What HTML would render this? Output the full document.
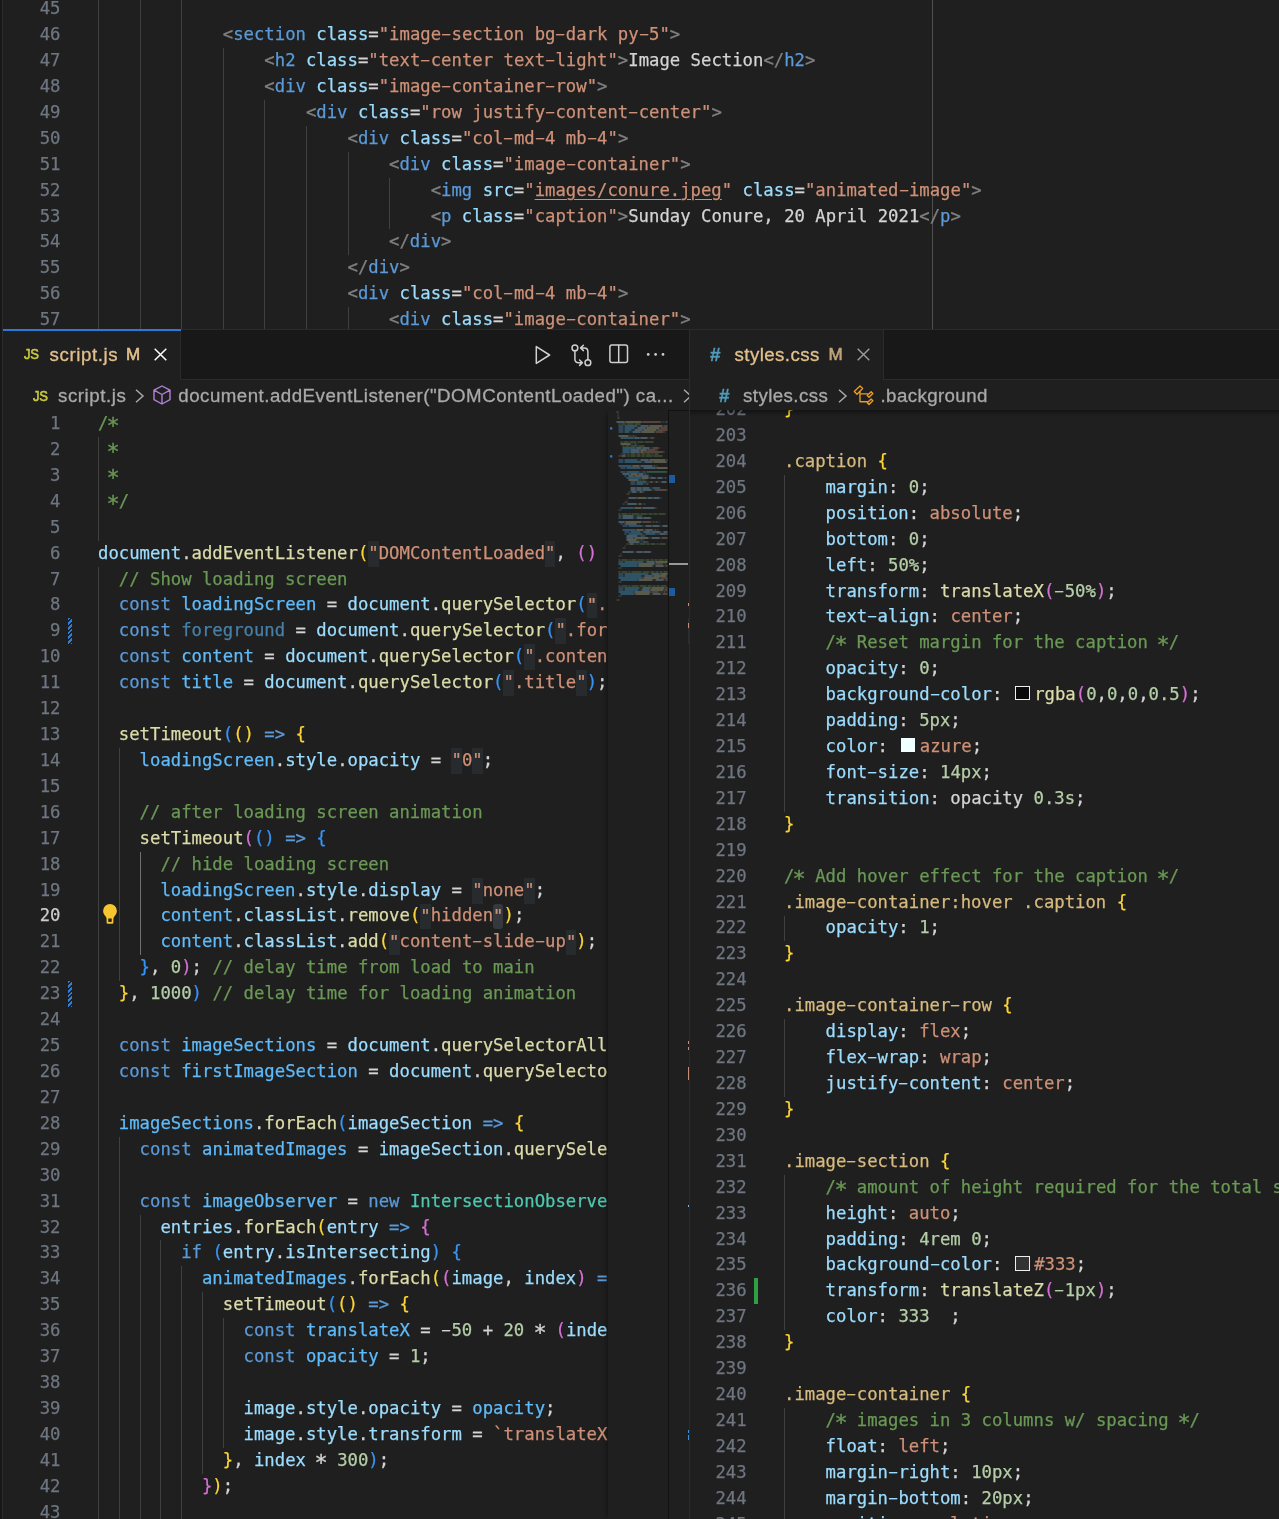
<!DOCTYPE html><html lang="en"><head><meta charset="utf-8"><title>editor</title><style>

*{margin:0;padding:0;box-sizing:border-box}
html,body{width:1279px;height:1519px;overflow:hidden;background:#1f1f1f}
body{position:relative;will-change:transform;font-family:"Liberation Sans",sans-serif;color:#ccc}
.pane{position:absolute;overflow:hidden;background:#1f1f1f}
.row{-webkit-text-stroke:.25px;position:absolute;left:0;height:25.92px;line-height:25.92px;white-space:pre;font-family:"DejaVu Sans Mono","Liberation Mono",monospace;font-size:17.28px;color:#d4d4d4}
.ln{position:absolute;left:0;width:60.5px;text-align:right;color:#6e7681}
.ln.act{color:#ccc}
.code{position:absolute;left:98px}
.k{color:#5b9ad8}.c{color:#5fbbfa}.cf{color:#5fbbfa;opacity:.62}.v{color:#9cdcfe}.f{color:#dcdcaa}
.s{color:#ce9178}.su{color:#ce9178;text-decoration:underline;text-underline-offset:3px;text-decoration-thickness:1px}
.q{color:#ce9178;background:#272b2e;padding:1.9px 0 4px}
.qs{color:#ce9178;background:#35393d;padding:1.9px 0 4px;border-radius:3px}
.n{color:#b5cea8}.m{color:#6a9955}.t{color:#4ec9b0}.g{color:#808080}
.b1{color:#fcd535}.b2{color:#d670d6}.b3{color:#3794f5}.sel{color:#d7ba7d}
.sw1,.sw2,.sw3{display:inline-block;width:14.4px;height:14.4px;border:1.4px solid #eee;margin:0 4.5px 0 2.5px;vertical-align:-.2px}
.sw1{background:#0a0a0a}.sw2{background:#f0ffff;border-color:#f0ffff}.sw3{background:#333}
.h,.a{display:inline-block;font-weight:inherit}.h{transform:translateY(-.6px) scale(1.8,.85)}.a{transform:translateY(3px) scale(1.27)}
.gd{position:absolute;width:1px;background:#404040}
.gd.ga{background:#707070}
.ui{-webkit-text-stroke:.3px;position:absolute;white-space:pre;font-size:18.7px;line-height:24px;height:24px}
.abs{position:absolute}
svg{position:absolute;overflow:visible}

</style></head><body>
<i class="abs" style="left:0;top:0;width:2px;height:1519px;background:#181818"></i><i class="abs" style="left:2px;top:0;width:1px;height:1519px;background:#2b2b2b"></i>
<div class="pane" id="top" style="left:3px;top:0;width:1276px;height:329px">
<i class="gd" style="left:95.0px;top:-3.8px;height:337.0px"></i><i class="gd" style="left:136.6px;top:-3.8px;height:337.0px"></i><i class="gd" style="left:178.2px;top:-3.8px;height:337.0px"></i><i class="gd" style="left:219.8px;top:48.0px;height:285.1px"></i><i class="gd" style="left:261.4px;top:99.9px;height:233.3px"></i><i class="gd" style="left:303.0px;top:125.8px;height:207.4px"></i><i class="gd" style="left:344.6px;top:151.7px;height:103.7px"></i><i class="gd" style="left:344.6px;top:307.2px;height:25.9px"></i><i class="gd" style="left:386.2px;top:177.6px;height:51.8px"></i>
<i class="abs" style="left:928.5px;top:0;width:1px;height:329px;background:#505050"></i>
<div class="row" style="left:-3px;top:-3.80px"><span class="ln">45</span><span class="code"></span></div>
<div class="row" style="left:-3px;top:22.12px"><span class="ln">46</span><span class="code">            <span class="g">&lt;</span><span class="k">section</span> <span class="v">class</span>=<span class="s">"image<b class="h">-</b>section bg<b class="h">-</b>dark py<b class="h">-</b>5"</span><span class="g">&gt;</span></span></div>
<div class="row" style="left:-3px;top:48.04px"><span class="ln">47</span><span class="code">                <span class="g">&lt;</span><span class="k">h2</span> <span class="v">class</span>=<span class="s">"text<b class="h">-</b>center text<b class="h">-</b>light"</span><span class="g">&gt;</span>Image Section<span class="g">&lt;/</span><span class="k">h2</span><span class="g">&gt;</span></span></div>
<div class="row" style="left:-3px;top:73.96px"><span class="ln">48</span><span class="code">                <span class="g">&lt;</span><span class="k">div</span> <span class="v">class</span>=<span class="s">"image<b class="h">-</b>container<b class="h">-</b>row"</span><span class="g">&gt;</span></span></div>
<div class="row" style="left:-3px;top:99.88px"><span class="ln">49</span><span class="code">                    <span class="g">&lt;</span><span class="k">div</span> <span class="v">class</span>=<span class="s">"row justify<b class="h">-</b>content<b class="h">-</b>center"</span><span class="g">&gt;</span></span></div>
<div class="row" style="left:-3px;top:125.80px"><span class="ln">50</span><span class="code">                        <span class="g">&lt;</span><span class="k">div</span> <span class="v">class</span>=<span class="s">"col<b class="h">-</b>md<b class="h">-</b>4 mb<b class="h">-</b>4"</span><span class="g">&gt;</span></span></div>
<div class="row" style="left:-3px;top:151.72px"><span class="ln">51</span><span class="code">                            <span class="g">&lt;</span><span class="k">div</span> <span class="v">class</span>=<span class="s">"image<b class="h">-</b>container"</span><span class="g">&gt;</span></span></div>
<div class="row" style="left:-3px;top:177.64px"><span class="ln">52</span><span class="code">                                <span class="g">&lt;</span><span class="k">img</span> <span class="v">src</span>=<span class="s">"</span><span class="su">images/conure.jpeg</span><span class="s">"</span> <span class="v">class</span>=<span class="s">"animated<b class="h">-</b>image"</span><span class="g">&gt;</span></span></div>
<div class="row" style="left:-3px;top:203.56px"><span class="ln">53</span><span class="code">                                <span class="g">&lt;</span><span class="k">p</span> <span class="v">class</span>=<span class="s">"caption"</span><span class="g">&gt;</span>Sunday Conure, 20 April 2021<span class="g">&lt;/</span><span class="k">p</span><span class="g">&gt;</span></span></div>
<div class="row" style="left:-3px;top:229.48px"><span class="ln">54</span><span class="code">                            <span class="g">&lt;/</span><span class="k">div</span><span class="g">&gt;</span></span></div>
<div class="row" style="left:-3px;top:255.40px"><span class="ln">55</span><span class="code">                        <span class="g">&lt;/</span><span class="k">div</span><span class="g">&gt;</span></span></div>
<div class="row" style="left:-3px;top:281.32px"><span class="ln">56</span><span class="code">                        <span class="g">&lt;</span><span class="k">div</span> <span class="v">class</span>=<span class="s">"col<b class="h">-</b>md<b class="h">-</b>4 mb<b class="h">-</b>4"</span><span class="g">&gt;</span></span></div>
<div class="row" style="left:-3px;top:307.24px"><span class="ln">57</span><span class="code">                            <span class="g">&lt;</span><span class="k">div</span> <span class="v">class</span>=<span class="s">"image<b class="h">-</b>container"</span><span class="g">&gt;</span></span></div>
</div>
<i class="abs" style="left:3px;top:329px;width:1276px;height:1.6px;background:#2b2b2b"></i>
<div class="pane" id="left" style="left:3px;top:330px;width:686px;height:1189px">
<div class="abs" style="left:0;top:0;width:686px;height:49px;background:#181818"></div>
<i class="abs" style="left:0;top:49px;width:686px;height:1px;background:#2b2b2b"></i>
<div class="abs" style="left:0;top:0;width:178px;height:50px;background:#1f1f1f;border-right:1px solid #2b2b2b"></div>
<span class="ui" id="ljs" style="left:21px;top:12.3px;color:#cbcb41;font-size:14.5px;-webkit-text-stroke:.55px;letter-spacing:-.3px;transform:scaleX(.9);transform-origin:0 50%">JS</span>
<span class="ui" id="ltab" style="left:46.5px;top:12.5px;color:#e2c08d;letter-spacing:.6px">script.js</span>
<span class="ui" id="ltabm" style="left:123px;top:12.5px;color:#e2c08d;font-size:17px;-webkit-text-stroke:.6px">M</span>
<svg style="left:151px;top:18px" width="13" height="13" viewBox="0 0 13 13"><path d="M.7.7l11.6 11.6M12.3.7L.7 12.3" stroke="#fff" stroke-width="1.5" fill="none"/></svg>
<svg style="left:532px;top:15px" width="16" height="20" viewBox="0 0 16 20"><path d="M1.3 1.6L14.6 10 1.3 18.4z" stroke="#d0d0d0" stroke-width="1.5" fill="none" stroke-linejoin="round"/></svg>
<svg style="left:567.5px;top:14px" width="21" height="23" viewBox="0 0 21 23"><g stroke="#d0d0d0" stroke-width="1.5" fill="none" stroke-linecap="round" stroke-linejoin="round"><circle cx="3.9" cy="3.9" r="2.9"/><circle cx="16.9" cy="18.7" r="2.9"/><path d="M3.9 6.8v8.2q0 3.7 3.7 3.7h3.6M8.6 16l2.8 2.7-2.8 2.7"/><path d="M16.9 15.8V7.6q0-3.7-3.7-3.7H9.8M12.4 1.2L9.6 3.9l2.8 2.7"/></g></svg>
<svg style="left:606px;top:14px" width="20" height="20" viewBox="0 0 20 20"><g stroke="#d0d0d0" stroke-width="1.5" fill="none"><rect x=".9" y=".9" width="17.6" height="17.6" rx="2"/><path d="M9.7.9v17.6"/></g></svg>
<svg style="left:643px;top:22px" width="20" height="5" viewBox="0 0 20 5"><g fill="#d0d0d0"><circle cx="2.2" cy="2.4" r="1.35"/><circle cx="9.6" cy="2.4" r="1.35"/><circle cx="17" cy="2.4" r="1.35"/></g></svg>
<span class="ui" id="lbjs" style="left:30px;top:53.6px;color:#cbcb41;font-size:14.5px;-webkit-text-stroke:.55px;letter-spacing:-.3px;transform:scaleX(.9);transform-origin:0 50%">JS</span>
<span class="ui" id="lb1" style="left:55px;top:53.6px;color:#a9a9a9;letter-spacing:.57px">script.js</span>
<svg style="left:132px;top:59px" width="9" height="14" viewBox="0 0 9 14"><path d="M1 .8l7 6.2-7 6.2" stroke="#a9a9a9" stroke-width="1.5" fill="none"/></svg>
<svg style="left:149.5px;top:55px" width="18" height="20" viewBox="0 0 18 20"><path d="M9 1L17 5.2v9.4L9 19 1 14.6V5.2zM1 5.2l8 4.3 8-4.3M9 9.5V19" stroke="#b180d7" stroke-width="1.4" fill="none" stroke-linejoin="round"/></svg>
<span class="ui" id="lb2" style="left:175.3px;top:53.6px;color:#a9a9a9;letter-spacing:.49px">document.addEventListener("DOMContentLoaded") ca...</span>
<svg style="left:680px;top:59px" width="9" height="14" viewBox="0 0 9 14"><path d="M1 .8l7 6.2-7 6.2" stroke="#a9a9a9" stroke-width="1.5" fill="none"/></svg>
<div class="abs" id="lcode" style="left:0;top:80px;width:604.5px;height:1109px;overflow:hidden">
<i class="gd" style="left:95.0px;top:26.9px;height:103.7px"></i><i class="gd" style="left:95.0px;top:156.5px;height:959.0px"></i><i class="gd" style="left:115.8px;top:338.0px;height:233.3px"></i><i class="gd ga" style="left:136.6px;top:441.6px;height:103.7px"></i><i class="gd" style="left:115.8px;top:726.8px;height:388.8px"></i><i class="gd" style="left:136.6px;top:804.5px;height:311.0px"></i><i class="gd" style="left:157.4px;top:830.4px;height:285.1px"></i><i class="gd" style="left:178.2px;top:856.4px;height:259.2px"></i><i class="gd" style="left:199.0px;top:882.3px;height:181.4px"></i><i class="gd" style="left:219.8px;top:908.2px;height:129.6px"></i>
<div class="row" style="left:-3px;top:1.00px"><span class="ln">1</span><span class="code"><span class="m">/<b class="a">*</b></span></span></div>
<div class="row" style="left:-3px;top:26.92px"><span class="ln">2</span><span class="code"><span class="m"> <b class="a">*</b></span></span></div>
<div class="row" style="left:-3px;top:52.84px"><span class="ln">3</span><span class="code"><span class="m"> <b class="a">*</b></span></span></div>
<div class="row" style="left:-3px;top:78.76px"><span class="ln">4</span><span class="code"><span class="m"> <b class="a">*</b>/</span></span></div>
<div class="row" style="left:-3px;top:104.68px"><span class="ln">5</span><span class="code"></span></div>
<div class="row" style="left:-3px;top:130.60px"><span class="ln">6</span><span class="code"><span class="v">document</span>.<span class="f">addEventListener</span><span class="b1">(</span><span class="q">"</span><span class="s">DOMContentLoaded</span><span class="q">"</span>, <span class="b2">()</span> <span class="k">=&gt;</span> <span class="b2">{</span></span></div>
<div class="row" style="left:-3px;top:156.52px"><span class="ln">7</span><span class="code">  <span class="m">// Show loading screen</span></span></div>
<div class="row" style="left:-3px;top:182.44px"><span class="ln">8</span><span class="code">  <span class="k">const</span> <span class="c">loadingScreen</span> = <span class="v">document</span>.<span class="f">querySelector</span><span class="b3">(</span><span class="q">"</span><span class="s">.loading<b class="h">-</b>screen</span><span class="q">"</span><span class="b3">)</span>;</span></div>
<div class="row" style="left:-3px;top:208.36px"><span class="ln">9</span><span class="code">  <span class="k">const</span> <span class="cf">foreground</span> = <span class="v">document</span>.<span class="f">querySelector</span><span class="b3">(</span><span class="q">"</span><span class="s">.foreground</span><span class="q">"</span><span class="b3">)</span>;</span></div>
<div class="row" style="left:-3px;top:234.28px"><span class="ln">10</span><span class="code">  <span class="k">const</span> <span class="c">content</span> = <span class="v">document</span>.<span class="f">querySelector</span><span class="b3">(</span><span class="q">"</span><span class="s">.content</span><span class="q">"</span><span class="b3">)</span>;</span></div>
<div class="row" style="left:-3px;top:260.20px"><span class="ln">11</span><span class="code">  <span class="k">const</span> <span class="c">title</span> = <span class="v">document</span>.<span class="f">querySelector</span><span class="b3">(</span><span class="q">"</span><span class="s">.title</span><span class="q">"</span><span class="b3">)</span>;</span></div>
<div class="row" style="left:-3px;top:286.12px"><span class="ln">12</span><span class="code"></span></div>
<div class="row" style="left:-3px;top:312.04px"><span class="ln">13</span><span class="code">  <span class="f">setTimeout</span><span class="b3">(</span><span class="b1">()</span> <span class="k">=&gt;</span> <span class="b1">{</span></span></div>
<div class="row" style="left:-3px;top:337.96px"><span class="ln">14</span><span class="code">    <span class="c">loadingScreen</span>.<span class="v">style</span>.<span class="v">opacity</span> = <span class="q">"</span><span class="s">0</span><span class="q">"</span>;</span></div>
<div class="row" style="left:-3px;top:363.88px"><span class="ln">15</span><span class="code"></span></div>
<div class="row" style="left:-3px;top:389.80px"><span class="ln">16</span><span class="code">    <span class="m">// after loading screen animation</span></span></div>
<div class="row" style="left:-3px;top:415.72px"><span class="ln">17</span><span class="code">    <span class="f">setTimeout</span><span class="b2">(</span><span class="b3">()</span> <span class="k">=&gt;</span> <span class="b3">{</span></span></div>
<div class="row" style="left:-3px;top:441.64px"><span class="ln">18</span><span class="code">      <span class="m">// hide loading screen</span></span></div>
<div class="row" style="left:-3px;top:467.56px"><span class="ln">19</span><span class="code">      <span class="c">loadingScreen</span>.<span class="v">style</span>.<span class="v">display</span> = <span class="q">"</span><span class="s">none</span><span class="q">"</span>;</span></div>
<div class="row" style="left:-3px;top:493.48px"><span class="ln act">20</span><span class="code">      <span class="c">content</span>.<span class="v">classList</span>.<span class="f">remove</span><span class="b1">(</span><span class="q">"</span><span class="s">hidden</span><span class="qs">"</span><span class="b1">)</span>;</span></div>
<div class="row" style="left:-3px;top:519.40px"><span class="ln">21</span><span class="code">      <span class="c">content</span>.<span class="v">classList</span>.<span class="f">add</span><span class="b1">(</span><span class="q">"</span><span class="s">content<b class="h">-</b>slide<b class="h">-</b>up</span><span class="q">"</span><span class="b1">)</span>;</span></div>
<div class="row" style="left:-3px;top:545.32px"><span class="ln">22</span><span class="code">    <span class="b3">}</span>, <span class="n">0</span><span class="b2">)</span>; <span class="m">// delay time from load to main</span></span></div>
<div class="row" style="left:-3px;top:571.24px"><span class="ln">23</span><span class="code">  <span class="b1">}</span>, <span class="n">1000</span><span class="b3">)</span> <span class="m">// delay time for loading animation</span></span></div>
<div class="row" style="left:-3px;top:597.16px"><span class="ln">24</span><span class="code"></span></div>
<div class="row" style="left:-3px;top:623.08px"><span class="ln">25</span><span class="code">  <span class="k">const</span> <span class="c">imageSections</span> = <span class="v">document</span>.<span class="f">querySelectorAll</span><span class="b3">(</span><span class="q">"</span><span class="s">.image<b class="h">-</b>section</span><span class="q">"</span><span class="b3">)</span>;</span></div>
<div class="row" style="left:-3px;top:649.00px"><span class="ln">26</span><span class="code">  <span class="k">const</span> <span class="c">firstImageSection</span> = <span class="v">document</span>.<span class="f">querySelector</span><span class="b3">(</span><span class="q">"</span><span class="s">.image<b class="h">-</b>section</span><span class="q">"</span><span class="b3">)</span>;</span></div>
<div class="row" style="left:-3px;top:674.92px"><span class="ln">27</span><span class="code"></span></div>
<div class="row" style="left:-3px;top:700.84px"><span class="ln">28</span><span class="code">  <span class="c">imageSections</span>.<span class="f">forEach</span><span class="b3">(</span><span class="v">imageSection</span> <span class="k">=&gt;</span> <span class="b1">{</span></span></div>
<div class="row" style="left:-3px;top:726.76px"><span class="ln">29</span><span class="code">    <span class="k">const</span> <span class="c">animatedImages</span> = <span class="v">imageSection</span>.<span class="f">querySelectorAll</span><span class="b2">(</span><span class="q">"</span><span class="s">.animated<b class="h">-</b>image</span><span class="q">"</span><span class="b2">)</span>;</span></div>
<div class="row" style="left:-3px;top:752.68px"><span class="ln">30</span><span class="code"></span></div>
<div class="row" style="left:-3px;top:778.60px"><span class="ln">31</span><span class="code">    <span class="k">const</span> <span class="c">imageObserver</span> = <span class="k">new</span> <span class="t">IntersectionObserver</span><span class="b2">(</span><span class="b3">(</span><span class="v">entries</span><span class="b3">)</span> <span class="k">=&gt;</span> <span class="b3">{</span></span></div>
<div class="row" style="left:-3px;top:804.52px"><span class="ln">32</span><span class="code">      <span class="v">entries</span>.<span class="f">forEach</span><span class="b1">(</span><span class="v">entry</span> <span class="k">=&gt;</span> <span class="b2">{</span></span></div>
<div class="row" style="left:-3px;top:830.44px"><span class="ln">33</span><span class="code">        <span class="k">if</span> <span class="b3">(</span><span class="v">entry</span>.<span class="v">isIntersecting</span><span class="b3">)</span> <span class="b3">{</span></span></div>
<div class="row" style="left:-3px;top:856.36px"><span class="ln">34</span><span class="code">          <span class="c">animatedImages</span>.<span class="f">forEach</span><span class="b1">(</span><span class="b2">(</span><span class="v">image</span>, <span class="v">index</span><span class="b2">)</span> <span class="k">=&gt;</span> <span class="b2">{</span></span></div>
<div class="row" style="left:-3px;top:882.28px"><span class="ln">35</span><span class="code">            <span class="f">setTimeout</span><span class="b3">(</span><span class="b1">()</span> <span class="k">=&gt;</span> <span class="b1">{</span></span></div>
<div class="row" style="left:-3px;top:908.20px"><span class="ln">36</span><span class="code">              <span class="k">const</span> <span class="c">translateX</span> = <b class="h">-</b><span class="n">50</span> + <span class="n">20</span> <b class="a">*</b> <span class="b2">(</span><span class="v">index</span> <b class="h">-</b> <span class="n">1</span><span class="b2">)</span>;</span></div>
<div class="row" style="left:-3px;top:934.12px"><span class="ln">37</span><span class="code">              <span class="k">const</span> <span class="c">opacity</span> = <span class="n">1</span>;</span></div>
<div class="row" style="left:-3px;top:960.04px"><span class="ln">38</span><span class="code"></span></div>
<div class="row" style="left:-3px;top:985.96px"><span class="ln">39</span><span class="code">              <span class="v">image</span>.<span class="v">style</span>.<span class="v">opacity</span> = <span class="c">opacity</span>;</span></div>
<div class="row" style="left:-3px;top:1011.88px"><span class="ln">40</span><span class="code">              <span class="v">image</span>.<span class="v">style</span>.<span class="v">transform</span> = <span class="s">`translateX(</span><span class="k">${</span><span class="c">translateX</span><span class="k">}</span><span class="s">%)`</span>;</span></div>
<div class="row" style="left:-3px;top:1037.80px"><span class="ln">41</span><span class="code">            <span class="b1">}</span>, <span class="v">index</span> <b class="a">*</b> <span class="n">300</span><span class="b3">)</span>;</span></div>
<div class="row" style="left:-3px;top:1063.72px"><span class="ln">42</span><span class="code">          <span class="b2">}</span><span class="b1">)</span>;</span></div>
<div class="row" style="left:-3px;top:1089.64px"><span class="ln">43</span><span class="code"></span></div>
<i class="abs" style="left:65px;top:208.4px;width:4.3px;height:26px;background:repeating-linear-gradient(135deg,#2b7fdb 0 1.9px,#1f1f1f 1.9px 3.3px)"></i>
<i class="abs" style="left:65px;top:571.2px;width:4.3px;height:26px;background:repeating-linear-gradient(135deg,#2b7fdb 0 1.9px,#1f1f1f 1.9px 3.3px)"></i>
<svg style="left:99.9px;top:494.1px" width="14" height="20" viewBox="0 0 14 20"><path d="M7 0a6.9 6.9 0 0 1 6.9 6.9c0 2.6-1.6 4.3-2.6 5.7-.6.9-.9 1.6-.9 2.6v3.3a1.2 1.2 0 0 1-1.2 1.2H4.8a1.2 1.2 0 0 1-1.2-1.2v-3.3c0-1-.3-1.700-.9-2.6C1.700 11.200.1 9.500.1 6.900A6.900 6.900 0 0 1 7 0z" fill="#f6c52f"/><rect x="5.300" y="14.500" width="3.400" height="3.400" fill="#1f1f1f"/></svg>
</div>
<div class="abs" id="lmini" style="left:604.5px;top:80px;width:61px;height:1109px;box-shadow:-4px 0 5px -3px rgba(0,0,0,.4)">
<svg style="left:0;top:0" width="61" height="200" viewBox="0 0 61 200"><g fill="none" stroke-width="1.45" opacity="0.42"><path d="M8.5 1.925h2M9.5 3.925h1M9.5 5.925h1M9.5 7.925h2M10.5 13.925h2M13.5 13.925h4M18.5 13.925h7M26.5 13.925h6M12.5 31.925h2M15.5 31.925h5M21.5 31.925h7M29.5 31.925h6M36.5 31.925h9M14.5 35.925h2M17.5 35.925h4M22.5 35.925h7M30.5 35.925h6M19.5 43.925h2M22.5 43.925h5M28.5 43.925h4M33.5 43.925h4M38.5 43.925h4M43.5 43.925h2M46.5 43.925h4M19.5 45.925h2M22.5 45.925h5M28.5 45.925h4M33.5 45.925h3M37.5 45.925h7M45.5 45.925h9M10.5 103.92h2M13.5 103.92h6M20.5 103.92h2M23.5 103.92h8M32.5 103.92h7M40.5 103.92h4M45.5 103.92h4M50.5 103.92h7M28.5 133.92h2M31.5 133.92h6M38.5 133.92h3M42.5 133.92h5M48.5 133.92h2M51.5 133.92h6M10.5 149.92h2M13.5 149.92h6M20.5 149.92h2M23.5 149.92h5M29.5 149.92h7M37.5 149.92h4M42.5 149.92h3M46.5 149.92h3M50.5 149.92h5M56.5 149.92h3M10.5 161.92h2M13.5 161.92h6M20.5 161.92h2M23.5 161.92h10M34.5 161.92h7M42.5 161.92h4M47.5 161.92h3M51.5 161.92h3M55.5 161.92h4M10.5 175.92h2M13.5 175.92h6M20.5 175.92h2M23.5 175.92h7M31.5 175.92h7M39.5 175.92h4M44.5 175.92h3M48.5 175.92h3M52.5 175.92h6" stroke="#6a9955"/><path d="M8.5 11.925h8M32.5 15.925h8M29.5 17.925h8M26.5 19.925h8M24.5 21.925h8M26.5 27.925h5M32.5 27.925h7M28.5 37.925h5M34.5 37.925h7M22.5 39.925h9M22.5 41.925h9M32.5 49.925h8M36.5 51.925h8M32.5 55.925h12M35.5 57.925h12M14.5 63.925h7M30.5 63.925h5M20.5 65.925h5M26.5 65.925h14M42.5 67.925h5M49.5 67.925h5M53.5 71.925h5M22.5 77.925h5M28.5 77.925h5M34.5 77.925h7M22.5 79.925h5M28.5 79.925h5M34.5 79.925h9M23.5 81.925h5M20.5 87.925h8M39.5 87.925h5M45.5 87.925h6M19.5 93.925h9M34.5 97.925h12M14.5 105.92h11M14.5 107.92h11M28.5 107.92h6M35.5 107.92h7M10.5 111.92h6M17.5 113.92h11M37.5 115.92h6M44.5 115.92h7M54.5 115.92h5M37.5 119.92h7M35.5 121.92h7M43.5 121.92h9M55.5 121.92h4M51.5 123.92h6M58.5 123.92h1M18.5 125.92h11M18.5 127.92h7M43.5 127.92h8M20.5 131.92h11M14.5 141.92h11M28.5 141.92h6M35.5 141.92h7M38.5 151.92h8M47.5 155.92h8M43.5 163.92h8M36.5 165.92h8M47.5 169.92h8M34.5 177.92h8M33.5 179.92h8M44.5 183.92h8" stroke="#9cdcfe"/><path d="M16.5 11.925h1M52.5 11.925h1M30.5 15.925h1M40.5 15.925h1M27.5 17.925h1M37.5 17.925h1M24.5 19.925h1M34.5 19.925h1M22.5 21.925h1M32.5 21.925h1M56.5 21.925h1M25.5 27.925h1M31.5 27.925h1M40.5 27.925h1M45.5 27.925h1M27.5 37.925h1M33.5 37.925h1M42.5 37.925h1M50.5 37.925h1M21.5 39.925h1M31.5 39.925h1M48.5 39.925h1M21.5 41.925h1M31.5 41.925h1M55.5 41.925h1M13.5 43.925h1M17.5 43.925h1M11.5 45.925h1M30.5 49.925h1M40.5 49.925h1M34.5 51.925h1M44.5 51.925h1M23.5 55.925h1M33.5 57.925h1M47.5 57.925h1M32.5 61.925h1M21.5 63.925h1M25.5 65.925h1M32.5 67.925h1M47.5 67.925h1M39.5 71.925h1M41.5 71.925h1M45.5 71.925h1M50.5 71.925h1M36.5 73.925h1M39.5 73.925h1M27.5 77.925h1M33.5 77.925h1M42.5 77.925h1M51.5 77.925h1M27.5 79.925h1M33.5 79.925h1M44.5 79.925h1M21.5 81.925h1M29.5 81.925h1M35.5 81.925h1M20.5 83.925h1M28.5 87.925h1M44.5 87.925h1M52.5 87.925h1M18.5 91.925h1M15.5 93.925h1M28.5 93.925h1M36.5 93.925h1M25.5 97.925h1M47.5 97.925h1M12.5 99.925h1M26.5 105.92h1M33.5 105.92h1M26.5 107.92h1M34.5 107.92h1M42.5 107.92h1M16.5 111.92h1M42.5 111.92h1M16.5 113.92h1M35.5 115.92h1M43.5 115.92h1M52.5 115.92h1M27.5 119.92h1M33.5 121.92h1M42.5 121.92h1M53.5 121.92h1M35.5 123.92h1M48.5 123.92h2M57.5 123.92h1M30.5 125.92h1M36.5 125.92h1M25.5 127.92h1M51.5 127.92h1M32.5 131.92h1M39.5 131.92h1M19.5 133.92h1M26.5 133.92h1M16.5 137.92h1M26.5 141.92h1M34.5 141.92h1M42.5 141.92h1M12.5 145.92h1M36.5 151.92h1M46.5 151.92h1M29.5 153.92h1M54.5 153.92h1M29.5 155.92h1M55.5 155.92h1M12.5 157.92h1M41.5 163.92h1M51.5 163.92h1M34.5 165.92h1M44.5 165.92h1M34.5 167.92h1M29.5 169.92h1M55.5 169.92h1M12.5 171.92h1M32.5 177.92h1M42.5 177.92h1M31.5 179.92h1M41.5 179.92h1M25.5 181.92h1M50.5 181.92h1M26.5 183.92h1M52.5 183.92h1M12.5 185.92h1M10.5 189.92h1" stroke="#d4d4d4" opacity=".55"/><path d="M17.5 11.925h16M41.5 15.925h13M38.5 17.925h13M35.5 19.925h13M33.5 21.925h13M10.5 25.925h10M12.5 33.925h10M32.5 39.925h6M32.5 41.925h3M41.5 49.925h16M45.5 51.925h13M24.5 55.925h7M48.5 57.925h11M22.5 63.925h7M33.5 67.925h7M20.5 69.925h10M29.5 87.925h9M26.5 97.925h7M17.5 111.92h16M28.5 119.92h7M26.5 127.92h14M18.5 129.92h10M47.5 151.92h12M30.5 153.92h16M30.5 155.92h14M52.5 163.92h7M45.5 165.92h13M35.5 167.92h16M30.5 169.92h14M43.5 177.92h13M42.5 179.92h13M26.5 181.92h16M27.5 183.92h14" stroke="#dcdcaa"/><path d="M33.5 11.925h1M21.5 25.925h2M27.5 25.925h1M38.5 39.925h1M47.5 39.925h1M35.5 41.925h1M54.5 41.925h1M10.5 45.925h1M48.5 55.925h1M29.5 63.925h1M40.5 67.925h1M31.5 69.925h2M37.5 69.925h1M20.5 81.925h1M19.5 83.925h1M17.5 91.925h1M10.5 99.925h1M44.5 111.92h2M50.5 111.92h1M36.5 119.92h1M44.5 119.92h1M49.5 119.92h1M41.5 127.92h1M29.5 129.92h2M35.5 129.92h1M18.5 133.92h1M14.5 137.92h1M10.5 145.92h1M56.5 153.92h2M10.5 157.92h1M10.5 171.92h1M52.5 181.92h2M58.5 181.92h1M10.5 185.92h1M9.5 189.92h1" stroke="#ffd700" opacity=".55"/><path d="M34.5 11.925h1M35.5 11.925h16M51.5 11.925h1M55.5 15.925h1M56.5 15.925h3M52.5 17.925h1M53.5 17.925h6M49.5 19.925h1M50.5 19.925h8M58.5 19.925h1M47.5 21.925h1M48.5 21.925h6M54.5 21.925h1M42.5 27.925h1M43.5 27.925h1M44.5 27.925h1M44.5 37.925h1M45.5 37.925h4M49.5 37.925h1M39.5 39.925h1M40.5 39.925h6M46.5 39.925h1M36.5 41.925h1M37.5 41.925h16M53.5 41.925h1M58.5 49.925h1M46.5 79.925h12M34.5 111.92h8M53.5 127.92h6M47.5 153.92h7M57.5 155.92h2M52.5 167.92h7M57.5 169.92h2M57.5 177.92h2M56.5 179.92h3M43.5 181.92h7M54.5 183.92h5" stroke="#ce9178"/><path d="M54.5 11.925h2M22.5 33.925h1M16.5 43.925h1M58.5 61.925h1M39.5 63.925h1M41.5 67.925h1M54.5 67.925h1M52.5 71.925h1M18.5 83.925h1M16.5 91.925h1M35.5 93.925h1M33.5 97.925h1M46.5 97.925h1M15.5 113.92h1M28.5 113.92h1M30.5 113.92h1M19.5 123.92h1M16.5 135.92h1M12.5 143.92h1M44.5 155.92h1M44.5 169.92h1M41.5 183.92h1M8.5 189.92h1" stroke="#da70d6" opacity=".55"/><path d="M57.5 11.925h2M10.5 15.925h5M10.5 17.925h5M10.5 19.925h5M10.5 21.925h5M24.5 25.925h2M26.5 33.925h2M10.5 49.925h5M10.5 51.925h5M45.5 55.925h2M12.5 57.925h5M12.5 61.925h5M34.5 61.925h3M36.5 63.925h2M16.5 65.925h2M56.5 67.925h2M34.5 69.925h2M22.5 71.925h5M22.5 73.925h5M58.5 79.925h1M10.5 105.92h3M28.5 105.92h5M10.5 107.92h3M47.5 111.92h2M12.5 113.92h2M14.5 115.92h5M46.5 119.92h2M16.5 121.92h5M16.5 123.92h2M32.5 125.92h4M32.5 129.92h2M34.5 131.92h5M10.5 151.92h5M10.5 163.92h5M10.5 165.92h5M10.5 177.92h5M10.5 179.92h5M55.5 181.92h2" stroke="#569cd6"/><path d="M16.5 15.925h13M16.5 17.925h10M16.5 19.925h7M16.5 21.925h5M12.5 27.925h13M14.5 37.925h13M14.5 39.925h7M14.5 41.925h7M16.5 49.925h13M16.5 51.925h17M10.5 55.925h13M18.5 57.925h14M18.5 61.925h13M18.5 67.925h14M28.5 71.925h10M28.5 73.925h7M44.5 77.925h7M12.5 97.925h13M20.5 115.92h14M14.5 119.92h13M22.5 121.92h10M20.5 123.92h14M37.5 123.92h10M16.5 151.92h19M10.5 153.92h19M12.5 155.92h17M16.5 163.92h24M16.5 165.92h17M10.5 167.92h24M12.5 169.92h17M16.5 177.92h15M16.5 179.92h14M10.5 181.92h15M12.5 183.92h14" stroke="#4fc1ff"/><path d="M54.5 15.925h1M51.5 17.925h1M48.5 19.925h1M46.5 21.925h1M55.5 21.925h1M20.5 25.925h1M23.5 33.925h2M29.5 33.925h1M12.5 43.925h1M17.5 45.925h1M57.5 49.925h1M58.5 51.925h1M31.5 55.925h1M19.5 65.925h1M40.5 65.925h1M42.5 65.925h1M30.5 69.925h1M34.5 81.925h1M38.5 87.925h1M51.5 87.925h1M18.5 89.925h1M14.5 93.925h1M17.5 93.925h1M34.5 93.925h1M11.5 99.925h1M33.5 111.92h1M35.5 119.92h1M40.5 127.92h1M28.5 129.92h1M25.5 133.92h1M15.5 137.92h1M11.5 145.92h1M46.5 153.92h1M45.5 155.92h1M11.5 157.92h1M58.5 165.92h1M51.5 167.92h1M45.5 169.92h1M11.5 171.92h1M56.5 177.92h1M55.5 179.92h1M42.5 181.92h1M42.5 183.92h1M11.5 185.92h1" stroke="#179fff" opacity=".55"/><path d="M15.5 43.925h1M13.5 45.925h4M42.5 71.925h2M47.5 71.925h2M38.5 73.925h1M31.5 81.925h3M30.5 93.925h3M21.5 133.92h4" stroke="#b5cea8"/><path d="M38.5 61.925h20" stroke="#4ec9b0"/></g><path d="M2.1 17.2h2.2v2.2h-2.2zM2.1 45.2h2.2v2.2h-2.2z" fill="#2b7fdb"/></svg>
</div>
<i class="abs" style="left:664.7px;top:80.500px;width:1.2px;height:1109px;background:#111"></i>
<i class="abs" style="left:665.8px;top:145px;width:6.2px;height:8.2px;background:#1f5a9e"></i>
<i class="abs" style="left:665.8px;top:258px;width:6.2px;height:8.2px;background:#1f5a9e"></i>
<i class="abs" style="left:665.800px;top:232.700px;width:19.400px;height:2.200px;background:#9a9a9a"></i>
<i class="abs" style="left:664.7px;top:80.300px;width:21px;height:1.200px;background:#111"></i>
</div>
<i class="abs" style="left:3px;top:329px;width:178px;height:2px;background:#2a7ad8"></i>
<i class="abs" style="left:689px;top:330px;width:1px;height:1189px;background:#2b2b2b"></i>
<i class="abs" style="left:687.6px;top:618.0px;width:1.400px;height:26.0px;background:#2b2e30"></i>
<i class="abs" style="left:687.6px;top:603.0px;width:1.400px;height:2.7px;background:#c98d73"></i>
<i class="abs" style="left:687.6px;top:622.6px;width:1.400px;height:5.4px;background:#c98d73"></i>
<i class="abs" style="left:687.6px;top:1041.0px;width:1.400px;height:3.0px;background:#c98d73"></i>
<i class="abs" style="left:687.6px;top:1047.0px;width:1.400px;height:3.0px;background:#c98d73"></i>
<i class="abs" style="left:687.6px;top:1066.7px;width:1.400px;height:13.0px;background:#c98d73"></i>
<i class="abs" style="left:687.6px;top:1205.0px;width:1.400px;height:2.0px;background:#7fb2d8"></i>
<i class="abs" style="left:687.6px;top:1430.0px;width:1.400px;height:3.0px;background:#3b8eda"></i>
<i class="abs" style="left:687.6px;top:1435.0px;width:1.400px;height:5.0px;background:#3b8eda"></i>
<div class="pane" id="right" style="left:690px;top:330px;width:589px;height:1189px">
<div class="abs" style="left:0;top:0;width:589px;height:49px;background:#181818"></div>
<i class="abs" style="left:0;top:49px;width:589px;height:1px;background:#2b2b2b"></i>
<div class="abs" style="left:0;top:0;width:194px;height:50px;background:#1f1f1f;border-right:1px solid #2b2b2b"></div>
<span class="ui" id="rhash" style="left:20px;top:12.5px;color:#519aba;font-size:19px;font-weight:bold">#</span>
<span class="ui" id="rtab" style="left:44.5px;top:12.5px;color:#e2c08d;letter-spacing:.42px">styles.css</span>
<span class="ui" id="rtabm" style="left:138.5px;top:12.5px;color:#bfa277;font-size:17px;-webkit-text-stroke:.6px">M</span>
<svg style="left:167px;top:18px" width="13" height="13" viewBox="0 0 13 13"><path d="M.7.7l11.6 11.6M12.3.7L.7 12.3" stroke="#9d9d9d" stroke-width="1.4" fill="none"/></svg>
<span class="ui" id="rbhash" style="left:29px;top:53.6px;color:#519aba;font-size:19px;font-weight:bold">#</span>
<span class="ui" id="rb1" style="left:53px;top:53.6px;color:#a9a9a9;letter-spacing:.42px">styles.css</span>
<svg style="left:147.5px;top:59px" width="9" height="14" viewBox="0 0 9 14"><path d="M1 .8l7 6.2-7 6.2" stroke="#a9a9a9" stroke-width="1.5" fill="none"/></svg>
<svg style="left:163px;top:55px" width="22" height="21" viewBox="0 0 22 21"><g stroke="#e99c2b" stroke-width="1.35" fill="none" stroke-linejoin="round"><path d="M7 .9L9.650 3.550 3.950 9.250 1.300 6.600zM7 6.400V16.700H15.200M7 8.800H15.200"/><path d="M18.080 6.710L19.840 8.470 16.020 12.290 14.260 10.530zM18.080 14.010L19.840 15.770 16.020 19.590 14.260 17.830z"/></g></svg>
<span class="ui" id="rb2" style="left:190.5px;top:53.6px;color:#a9a9a9;letter-spacing:.4px">.background</span>
<div class="abs" id="rcode" style="left:0;top:80px;width:589px;height:1109px;overflow:hidden">
<i class="gd" style="left:94.0px;top:64.8px;height:337.0px"></i><i class="gd" style="left:94.0px;top:505.5px;height:25.9px"></i><i class="gd" style="left:94.0px;top:609.2px;height:77.8px"></i><i class="gd" style="left:94.0px;top:764.7px;height:155.5px"></i><i class="gd" style="left:94.0px;top:998.0px;height:129.6px"></i>
<div class="row rr" style="top:-12.92px"><span class="ln">202</span><span class="code"><span class="b1">}</span></span></div>
<div class="row rr" style="top:13.00px"><span class="ln">203</span><span class="code"></span></div>
<div class="row rr" style="top:38.92px"><span class="ln">204</span><span class="code"><span class="sel">.caption</span> <span class="b1">{</span></span></div>
<div class="row rr" style="top:64.84px"><span class="ln">205</span><span class="code">    <span class="v">margin</span>: <span class="n">0</span>;</span></div>
<div class="row rr" style="top:90.76px"><span class="ln">206</span><span class="code">    <span class="v">position</span>: <span class="s">absolute</span>;</span></div>
<div class="row rr" style="top:116.68px"><span class="ln">207</span><span class="code">    <span class="v">bottom</span>: <span class="n">0</span>;</span></div>
<div class="row rr" style="top:142.60px"><span class="ln">208</span><span class="code">    <span class="v">left</span>: <span class="n">50%</span>;</span></div>
<div class="row rr" style="top:168.52px"><span class="ln">209</span><span class="code">    <span class="v">transform</span>: <span class="f">translateX</span><span class="b2">(</span><span class="n"><b class="h">-</b>50%</span><span class="b2">)</span>;</span></div>
<div class="row rr" style="top:194.44px"><span class="ln">210</span><span class="code">    <span class="v">text<b class="h">-</b>align</span>: <span class="s">center</span>;</span></div>
<div class="row rr" style="top:220.36px"><span class="ln">211</span><span class="code">    <span class="m">/<b class="a">*</b> Reset margin for the caption <b class="a">*</b>/</span></span></div>
<div class="row rr" style="top:246.28px"><span class="ln">212</span><span class="code">    <span class="v">opacity</span>: <span class="n">0</span>;</span></div>
<div class="row rr" style="top:272.20px"><span class="ln">213</span><span class="code">    <span class="v">background<b class="h">-</b>color</span>: <span class="sw1"></span><span class="f">rgba</span><span class="b2">(</span><span class="n">0</span>,<span class="n">0</span>,<span class="n">0</span>,<span class="n">0.5</span><span class="b2">)</span>;</span></div>
<div class="row rr" style="top:298.12px"><span class="ln">214</span><span class="code">    <span class="v">padding</span>: <span class="n">5px</span>;</span></div>
<div class="row rr" style="top:324.04px"><span class="ln">215</span><span class="code">    <span class="v">color</span>: <span class="sw2"></span><span class="s">azure</span>;</span></div>
<div class="row rr" style="top:349.96px"><span class="ln">216</span><span class="code">    <span class="v">font<b class="h">-</b>size</span>: <span class="n">14px</span>;</span></div>
<div class="row rr" style="top:375.88px"><span class="ln">217</span><span class="code">    <span class="v">transition</span>: opacity <span class="n">0.3s</span>;</span></div>
<div class="row rr" style="top:401.80px"><span class="ln">218</span><span class="code"><span class="b1">}</span></span></div>
<div class="row rr" style="top:427.72px"><span class="ln">219</span><span class="code"></span></div>
<div class="row rr" style="top:453.64px"><span class="ln">220</span><span class="code"><span class="m">/<b class="a">*</b> Add hover effect for the caption <b class="a">*</b>/</span></span></div>
<div class="row rr" style="top:479.56px"><span class="ln">221</span><span class="code"><span class="sel">.image<b class="h">-</b>container:hover</span> <span class="sel">.caption</span> <span class="b1">{</span></span></div>
<div class="row rr" style="top:505.48px"><span class="ln">222</span><span class="code">    <span class="v">opacity</span>: <span class="n">1</span>;</span></div>
<div class="row rr" style="top:531.40px"><span class="ln">223</span><span class="code"><span class="b1">}</span></span></div>
<div class="row rr" style="top:557.32px"><span class="ln">224</span><span class="code"></span></div>
<div class="row rr" style="top:583.24px"><span class="ln">225</span><span class="code"><span class="sel">.image<b class="h">-</b>container<b class="h">-</b>row</span> <span class="b1">{</span></span></div>
<div class="row rr" style="top:609.16px"><span class="ln">226</span><span class="code">    <span class="v">display</span>: <span class="s">flex</span>;</span></div>
<div class="row rr" style="top:635.08px"><span class="ln">227</span><span class="code">    <span class="v">flex<b class="h">-</b>wrap</span>: <span class="s">wrap</span>;</span></div>
<div class="row rr" style="top:661.00px"><span class="ln">228</span><span class="code">    <span class="v">justify<b class="h">-</b>content</span>: <span class="s">center</span>;</span></div>
<div class="row rr" style="top:686.92px"><span class="ln">229</span><span class="code"><span class="b1">}</span></span></div>
<div class="row rr" style="top:712.84px"><span class="ln">230</span><span class="code"></span></div>
<div class="row rr" style="top:738.76px"><span class="ln">231</span><span class="code"><span class="sel">.image<b class="h">-</b>section</span> <span class="b1">{</span></span></div>
<div class="row rr" style="top:764.68px"><span class="ln">232</span><span class="code">    <span class="m">/<b class="a">*</b> amount of height required for the total scroll <b class="a">*</b>/</span></span></div>
<div class="row rr" style="top:790.60px"><span class="ln">233</span><span class="code">    <span class="v">height</span>: <span class="s">auto</span>;</span></div>
<div class="row rr" style="top:816.52px"><span class="ln">234</span><span class="code">    <span class="v">padding</span>: <span class="n">4rem</span> <span class="n">0</span>;</span></div>
<div class="row rr" style="top:842.44px"><span class="ln">235</span><span class="code">    <span class="v">background<b class="h">-</b>color</span>: <span class="sw3"></span><span class="s">#333</span>;</span></div>
<div class="row rr" style="top:868.36px"><span class="ln">236</span><span class="code">    <span class="v">transform</span>: <span class="f">translateZ</span><span class="b2">(</span><span class="n"><b class="h">-</b>1px</span><span class="b2">)</span>;</span></div>
<div class="row rr" style="top:894.28px"><span class="ln">237</span><span class="code">    <span class="v">color</span>: <span class="n">333</span>  ;</span></div>
<div class="row rr" style="top:920.20px"><span class="ln">238</span><span class="code"><span class="b1">}</span></span></div>
<div class="row rr" style="top:946.12px"><span class="ln">239</span><span class="code"></span></div>
<div class="row rr" style="top:972.04px"><span class="ln">240</span><span class="code"><span class="sel">.image<b class="h">-</b>container</span> <span class="b1">{</span></span></div>
<div class="row rr" style="top:997.96px"><span class="ln">241</span><span class="code">    <span class="m">/<b class="a">*</b> images in 3 columns w/ spacing <b class="a">*</b>/</span></span></div>
<div class="row rr" style="top:1023.88px"><span class="ln">242</span><span class="code">    <span class="v">float</span>: <span class="s">left</span>;</span></div>
<div class="row rr" style="top:1049.80px"><span class="ln">243</span><span class="code">    <span class="v">margin<b class="h">-</b>right</span>: <span class="n">10px</span>;</span></div>
<div class="row rr" style="top:1075.72px"><span class="ln">244</span><span class="code">    <span class="v">margin<b class="h">-</b>bottom</span>: <span class="n">20px</span>;</span></div>
<div class="row rr" style="top:1101.64px"><span class="ln">245</span><span class="code">    <span class="v">position</span>: <span class="s">relative</span>;</span></div>
<i class="abs" style="left:64px;top:868.4px;width:4px;height:26px;background:#2ea043"></i>
<i class="abs" style="left:0;top:0;width:589px;height:6px;background:linear-gradient(#0006,#0000)"></i>
</div>
</div>
<style>.rr .ln{width:56.6px}.rr .code{left:94px}</style>
</body></html>
